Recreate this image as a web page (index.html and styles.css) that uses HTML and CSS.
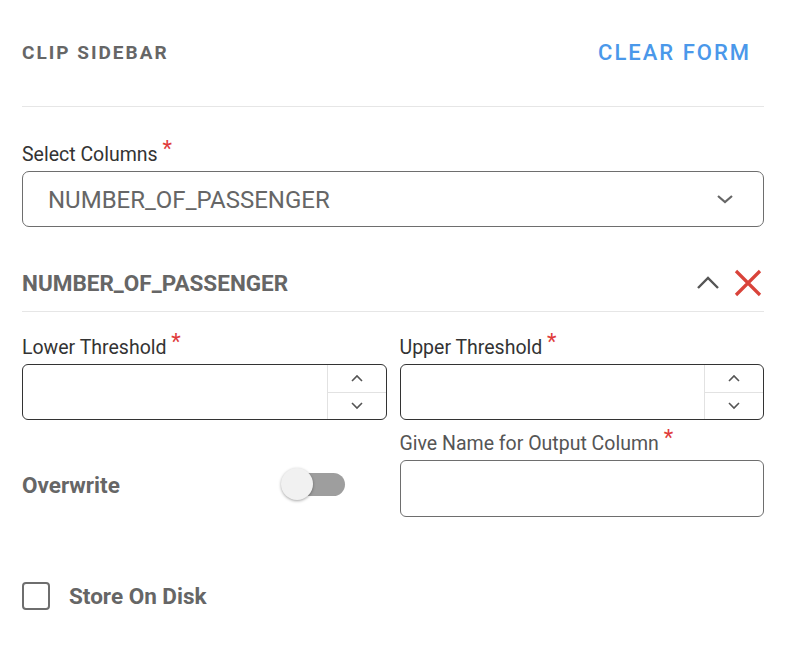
FILE: index.html
```html
<!DOCTYPE html>
<html>
<head>
<meta charset="utf-8">
<link rel="stylesheet" href="styles.css">
</head>
<body>
<div class="panel">
  <div class="header">
    <span class="title">CLIP SIDEBAR</span>
    <span class="clear">CLEAR FORM</span>
  </div>

  <div class="field">
    <label class="label">Select Columns <span class="req">*</span></label>
    <div class="select">
      <span class="select-value">NUMBER_OF_PASSENGER</span>
      <svg class="select-chev" width="18" height="10" viewBox="0 0 18 10"><path d="M2 2 L9 8 L16 2" fill="none" stroke="#666" stroke-width="2.2"/></svg>
    </div>
  </div>

  <div class="section">
    <span class="section-title">NUMBER_OF_PASSENGER</span>
    <div class="section-icons">
      <svg width="24" height="14" viewBox="0 0 24 14"><path d="M2 12 L12 2 L22 12" fill="none" stroke="#555" stroke-width="2.4"/></svg>
      <svg width="28" height="28" viewBox="0 0 28 28"><path d="M2 2 L26 26 M26 2 L2 26" fill="none" stroke="#d9433a" stroke-width="3.2"/></svg>
    </div>
  </div>

  <div class="grid">
    <div class="field">
      <label class="label">Lower Threshold <span class="req">*</span></label>
      <div class="num">
        <div class="num-input"></div>
        <div class="spin">
          <div class="spin-btn"><svg width="14" height="8" viewBox="0 0 14 8"><path d="M2 7 L7 2 L12 7" fill="none" stroke="#555" stroke-width="1.6"/></svg></div>
          <div class="spin-btn"><svg width="14" height="8" viewBox="0 0 14 8"><path d="M2 1 L7 6 L12 1" fill="none" stroke="#555" stroke-width="1.6"/></svg></div>
        </div>
      </div>
    </div>
    <div class="field">
      <label class="label">Upper Threshold <span class="req">*</span></label>
      <div class="num">
        <div class="num-input"></div>
        <div class="spin">
          <div class="spin-btn"><svg width="14" height="8" viewBox="0 0 14 8"><path d="M2 7 L7 2 L12 7" fill="none" stroke="#555" stroke-width="1.6"/></svg></div>
          <div class="spin-btn"><svg width="14" height="8" viewBox="0 0 14 8"><path d="M2 1 L7 6 L12 1" fill="none" stroke="#555" stroke-width="1.6"/></svg></div>
        </div>
      </div>
    </div>
  </div>

  <div class="grid grid2">
    <div class="overwrite">
      <span class="bold-label">Overwrite</span>
      <div class="toggle"><div class="track"></div><div class="thumb"></div></div>
    </div>
    <div class="field">
      <label class="label label-gray">Give Name for Output Column <span class="req">*</span></label>
      <div class="text-input"></div>
    </div>
  </div>

  <div class="check-row">
    <div class="checkbox"></div>
    <span class="bold-label">Store On Disk</span>
  </div>
</div>
</body>
</html>
```

FILE: styles.css
```css
* { box-sizing: border-box; }
html, body { margin: 0; padding: 0; background: #fff; }
body { font-family: Roboto, "Liberation Sans", sans-serif; color: #333; }

.panel { padding: 0 22px; width: 786px; }

.header {
  display: flex;
  justify-content: space-between;
  align-items: center;
  height: 107px;
  padding-bottom: 2px;
  border-bottom: 1px solid #e6e6e6;
}
.title {
  font-size: 19px;
  font-weight: 700;
  letter-spacing: 2px;
  color: #666;
}
.clear {
  font-size: 22px;
  font-weight: 500;
  letter-spacing: 2px;
  color: #4a98ea;
  margin-right: 13px;
}

.field { display: flex; flex-direction: column; }
.header + .field { margin-top: 35px; }
.label {
  font-size: 19.5px;
  line-height: 24px;
  padding-top: 1px;
  color: #333;
  margin-bottom: 4px;
  white-space: nowrap;
}
.label-gray { color: #555; }
.req {
  color: #e03c3c;
  font-size: 22px;
  line-height: 0;
  position: relative;
  top: -5px;
}

.select {
  height: 56px;
  border: 1px solid #6e6e6e;
  border-radius: 7px;
  display: flex;
  align-items: center;
  justify-content: space-between;
  padding: 2px 29px 0 25px;
}
.select-value { font-size: 24px; color: #666; }
.select-chev { margin-top: -2px; }

.section {
  margin-top: 28px;
  height: 57px;
  border-bottom: 1px solid #e6e6e6;
  display: flex;
  align-items: center;
  justify-content: space-between;
}
.section-title { font-size: 22.5px; font-weight: 700; color: #666; }
.section-icons { display: flex; align-items: center; gap: 14px; margin-right: 2px; }

.grid {
  display: grid;
  grid-template-columns: 1fr 1fr;
  column-gap: 13px;
  margin-top: 23px;
}

.num {
  height: 56px;
  border: 1px solid #333;
  border-radius: 6px;
  display: flex;
  overflow: hidden;
}
.num-input { flex: 1; }
.spin {
  width: 59px;
  border-left: 1px solid #e2e2e2;
  display: flex;
  flex-direction: column;
}
.spin-btn {
  flex: 1;
  display: flex;
  align-items: center;
  justify-content: center;
}
.spin-btn + .spin-btn { border-top: 1px solid #e2e2e2; }

.grid2 { margin-top: 11px; align-items: end; }
.overwrite {
  height: 56px;
  display: flex;
  align-items: center;
  justify-content: space-between;
  padding-right: 42px;
  margin-bottom: 4px;
}
.bold-label { font-size: 22.5px; font-weight: 700; color: #666; }
.toggle { position: relative; width: 64px; height: 34px; }
.track {
  position: absolute;
  left: 4px; right: 0; top: 5px;
  height: 23px;
  border-radius: 12px;
  background: #9e9e9e;
}
.thumb {
  position: absolute;
  left: 0; top: 0;
  width: 32px; height: 32px;
  border-radius: 50%;
  background: #f1f1f1;
  box-shadow: 0 1px 3px rgba(0,0,0,0.35);
}
.text-input {
  height: 57px;
  border: 1px solid #6e6e6e;
  border-radius: 6px;
}

.check-row {
  margin-top: 65px;
  display: flex;
  align-items: center;
  gap: 19px;
}
.checkbox {
  width: 28px; height: 28px;
  border: 2.5px solid #6e6e6e;
  border-radius: 4px;
}
```
